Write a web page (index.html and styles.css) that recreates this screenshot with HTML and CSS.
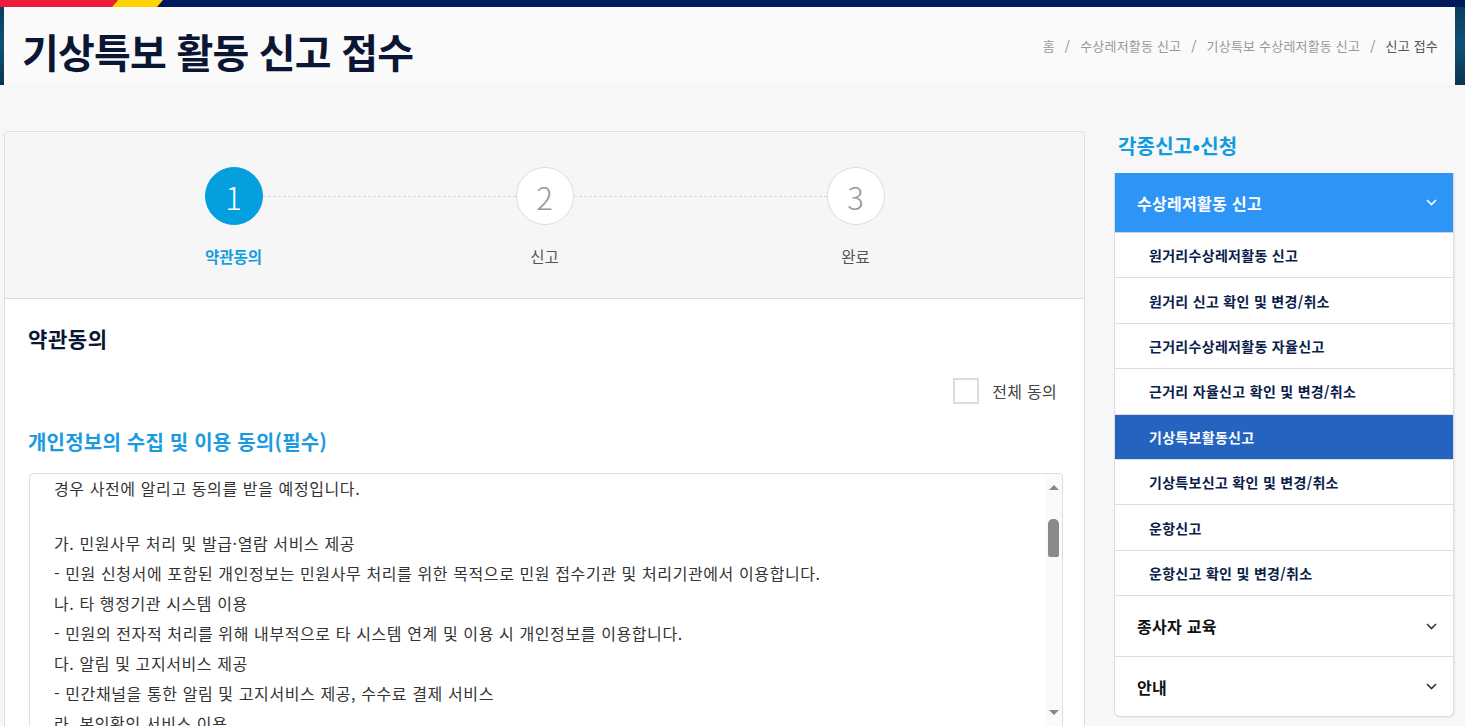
FILE: index.html
```html
<!DOCTYPE html>
<html lang="ko">
<head>
<meta charset="utf-8">
<title>기상특보 활동 신고 접수</title>
<link rel="stylesheet" href="styles.css">
</head>
<body>
<div class="stripe">
  <svg class="stripe-svg" width="1465" height="7" aria-hidden="true">
    <rect x="0" y="0" width="1465" height="7" fill="#001a5e"/>
    <polygon points="0,0 118,0 112,7 0,7" fill="#ee1b3b"/>
    <polygon points="118,0 163,0 157,7 112,7" fill="#ffd200"/>
  </svg>
</div>
<header class="header">
  <div class="header-inner">
    <h1 class="page-title">기상특보 활동 신고 접수</h1>
    <nav class="breadcrumb">
      <span>홈</span><span class="sep">/</span><span>수상레저활동 신고</span><span class="sep">/</span><span>기상특보 수상레저활동 신고</span><span class="sep">/</span><span class="current">신고 접수</span>
    </nav>
  </div>
</header>

<div class="page">
  <main class="card">
    <div class="steps">
      <div class="step active">
        <div class="circle">1</div>
        <div class="step-label">약관동의</div>
      </div>
      <div class="step">
        <div class="circle">2</div>
        <div class="step-label">신고</div>
      </div>
      <div class="step">
        <div class="circle">3</div>
        <div class="step-label">완료</div>
      </div>
    </div>

    <div class="content">
      <h2 class="section-title">약관동의</h2>
      <div class="agree-all">
        <span class="checkbox"></span>
        <span class="agree-label">전체 동의</span>
      </div>
      <h3 class="terms-title">개인정보의 수집 및 이용 동의(필수)</h3>
      <div class="terms-box">
        <div class="terms-text">
          <p class="terms-first">경우 사전에 알리고 동의를 받을 예정입니다.</p>
          <p>가. 민원사무 처리 및 발급·열람 서비스 제공</p>
          <p>- 민원 신청서에 포함된 개인정보는 민원사무 처리를 위한 목적으로 민원 접수기관 및 처리기관에서 이용합니다.</p>
          <p>나. 타 행정기관 시스템 이용</p>
          <p>- 민원의 전자적 처리를 위해 내부적으로 타 시스템 연계 및 이용 시 개인정보를 이용합니다.</p>
          <p>다. 알림 및 고지서비스 제공</p>
          <p>- 민간채널을 통한 알림 및 고지서비스 제공, 수수료 결제 서비스</p>
          <p>라. 본인확인 서비스 이용</p>
          <p>- 본인확인을 위하여 본인확인기관의 서비스를 이용합니다.</p>
        </div>
        <div class="scrollbar">
          <span class="arrow-up"></span>
          <div class="track"><span class="thumb"></span></div>
          <span class="arrow-down"></span>
        </div>
      </div>
    </div>
  </main>

  <aside class="sidebar">
    <h2 class="side-title">각종신고•신청</h2>
    <nav class="side-nav">
      <div class="nav-group open">
        <div class="nav-head">
          <span>수상레저활동 신고</span>
          <svg class="chev" width="11" height="7" viewBox="0 0 11 7"><polyline points="1,1 5.5,5.5 10,1" fill="none" stroke="currentColor" stroke-width="1.6"/></svg>
        </div>
        <ul class="sub-list">
          <li class="sub-item">원거리수상레저활동 신고</li>
          <li class="sub-item">원거리 신고 확인 및 변경/취소</li>
          <li class="sub-item">근거리수상레저활동 자율신고</li>
          <li class="sub-item">근거리 자율신고 확인 및 변경/취소</li>
          <li class="sub-item active">기상특보활동신고</li>
          <li class="sub-item">기상특보신고 확인 및 변경/취소</li>
          <li class="sub-item">운항신고</li>
          <li class="sub-item">운항신고 확인 및 변경/취소</li>
        </ul>
      </div>
      <div class="nav-group">
        <div class="nav-head">
          <span>종사자 교육</span>
          <svg class="chev" width="11" height="7" viewBox="0 0 11 7"><polyline points="1,1 5.5,5.5 10,1" fill="none" stroke="currentColor" stroke-width="1.6"/></svg>
        </div>
      </div>
      <div class="nav-group last">
        <div class="nav-head">
          <span>안내</span>
          <svg class="chev" width="11" height="7" viewBox="0 0 11 7"><polyline points="1,1 5.5,5.5 10,1" fill="none" stroke="currentColor" stroke-width="1.6"/></svg>
        </div>
      </div>
    </nav>
  </aside>
</div>
</body>
</html>
```

FILE: styles.css
```css
* { box-sizing: border-box; }

html, body {
  margin: 0;
  padding: 0;
}

body {
  background: #f7f7f7;
  font-family: "Noto Sans CJK KR", "Noto Sans", sans-serif;
  color: #333;
  width: 1465px;
  overflow: hidden;
}

.stripe {
  height: 7px;
  line-height: 0;
}
.stripe-svg { display: block; }

.header {
  background: linear-gradient(180deg, #0b3d5e 0%, #0e5277 50%, #0a3450 100%);
  padding: 0 10px 0 4px;
}

.header-inner {
  background: #fafafa;
  height: 78px;
  display: flex;
  align-items: center;
  justify-content: space-between;
  padding: 10px 17px 0 18px;
}

.page-title {
  margin: 0;
  font-size: 40px;
  font-weight: 700;
  color: #0a1633;
  letter-spacing: -0.8px;
  line-height: 1;
}

.breadcrumb {
  font-size: 13px;
  color: #999;
  display: flex;
  align-items: center;
  margin-top: -12px;
  letter-spacing: 0.2px;
}
.breadcrumb .sep { margin: 0 10px; color: #888; }
.breadcrumb .current { color: #555; }

.page {
  display: flex;
  align-items: flex-start;
  gap: 29px;
  padding: 46px 11px 0 4px;
}

/* main card */
.card {
  width: 1081px;
  flex: none;
  background: #fff;
  border: 1px solid #ddd;
  border-radius: 4px;
  overflow: hidden;
  height: 640px;
}

.steps {
  background: #f6f6f6;
  border-bottom: 1px solid #ddd;
  display: grid;
  grid-template-columns: repeat(3, 311px);
  justify-content: center;
  padding: 35px 0 31px;
}

.step {
  position: relative;
  display: flex;
  flex-direction: column;
  align-items: center;
}

.step + .step::before {
  content: "";
  position: absolute;
  top: 29px;
  right: calc(50% + 29px);
  width: calc(311px - 58px);
  border-top: 1px dashed #d6d6d6;
}

.circle {
  width: 58px;
  height: 58px;
  border-radius: 50%;
  background: #fff;
  border: 1px solid #ddd;
  color: #999;
  font-family: "Noto Sans CJK KR", sans-serif;
  font-weight: 300;
  font-size: 31px;
  display: flex;
  align-items: center;
  justify-content: center;
  line-height: 1;
  position: relative;
  z-index: 1;
}

.step.active .circle {
  background: #049fdf;
  border-color: #049fdf;
  color: #fff;
}

.step-label {
  margin-top: 20px;
  font-size: 15.5px;
  line-height: 22px;
  color: #555;
}
.step.active .step-label {
  color: #119de0;
  font-weight: 700;
}

.content {
  padding: 25px 23px 0 23px;
}

.section-title {
  margin: 0;
  font-size: 21px;
  line-height: 28px;
  font-weight: 700;
  color: #0a1633;
  letter-spacing: 0.6px;
}

.agree-all {
  display: flex;
  justify-content: flex-end;
  align-items: center;
  gap: 13px;
  margin-top: 26px;
  height: 26px;
  padding-right: 4px;
}

.checkbox {
  width: 26px;
  height: 26px;
  border: 2px solid #dcdcdc;
  background: #fff;
}

.agree-label {
  font-size: 16px;
  color: #444;
  letter-spacing: 0.3px;
}

.terms-title {
  margin: 25px 0 0;
  font-size: 20px;
  line-height: 26px;
  font-weight: 700;
  color: #1a9be0;
  letter-spacing: 0.2px;
}

.terms-box {
  margin-top: 18px;
  margin-left: 1px;
  width: 1034px;
  height: 300px;
  border: 1px solid #ddd;
  border-radius: 4px;
  display: flex;
  overflow: hidden;
}

.terms-text {
  flex: 1;
  padding: 0 24px;
  margin-top: -1px;
  font-size: 16px;
  line-height: 30px;
  color: #333;
  letter-spacing: 0.6px;
}
.terms-text p { margin: 0; white-space: nowrap; }
.terms-text .terms-first { margin-bottom: 25px; }

.scrollbar {
  width: 17px;
  flex: none;
  background: #fafafa;
  display: flex;
  flex-direction: column;
  align-items: center;
  padding-top: 11px;
}

.arrow-up {
  width: 0;
  height: 0;
  border-left: 5px solid transparent;
  border-right: 5px solid transparent;
  border-bottom: 5px solid #888;
}
.arrow-down {
  width: 0;
  height: 0;
  border-left: 5px solid transparent;
  border-right: 5px solid transparent;
  border-top: 5px solid #888;
}

.track {
  height: 220px;
  width: 100%;
  display: flex;
  justify-content: center;
  padding-top: 29px;
}

.thumb {
  width: 11px;
  height: 38px;
  background: #8a8a8a;
  border-radius: 5px 5px 2px 2px;
}

/* sidebar */
.sidebar {
  width: 340px;
  flex: none;
}

.side-title {
  margin: 1px 0 0 4px;
  font-size: 20px;
  line-height: 28px;
  font-weight: 700;
  color: #0e9be0;
  letter-spacing: 0.2px;
}

.side-nav {
  margin-top: 13px;
  background: #fff;
  border: 1px solid #ddd;
  border-top: none;
  border-radius: 0 0 6px 6px;
  box-shadow: 1px 1px 2px rgba(0,0,0,0.06);
  overflow: hidden;
}

.nav-head {
  display: flex;
  align-items: center;
  justify-content: space-between;
  padding: 0 16px 0 22px;
  height: 61px;
  font-size: 16px;
  font-weight: 700;
  color: #111;
  letter-spacing: 0.3px;
  border-bottom: 1px solid #ddd;
}
.nav-group.last .nav-head { border-bottom: none; height: 59px; }

.nav-group.open .nav-head {
  background: #2d95f6;
  color: #fff;
  height: 60px;
  border-bottom: 1px solid #d0d0d0;
}

.chev { color: #333; display: block; }
.nav-group.open .chev { color: #fff; }

.sub-list {
  list-style: none;
  margin: 0;
  padding: 0;
}

.sub-item {
  height: 45.4px;
  display: flex;
  align-items: center;
  padding-left: 34px;
  font-size: 14px;
  font-weight: 700;
  color: #0b1d4a;
  letter-spacing: 0.3px;
  border-bottom: 1px solid #ddd;
}
.sub-item.active {
  background: #2563c0;
  color: #fff;
}
```
